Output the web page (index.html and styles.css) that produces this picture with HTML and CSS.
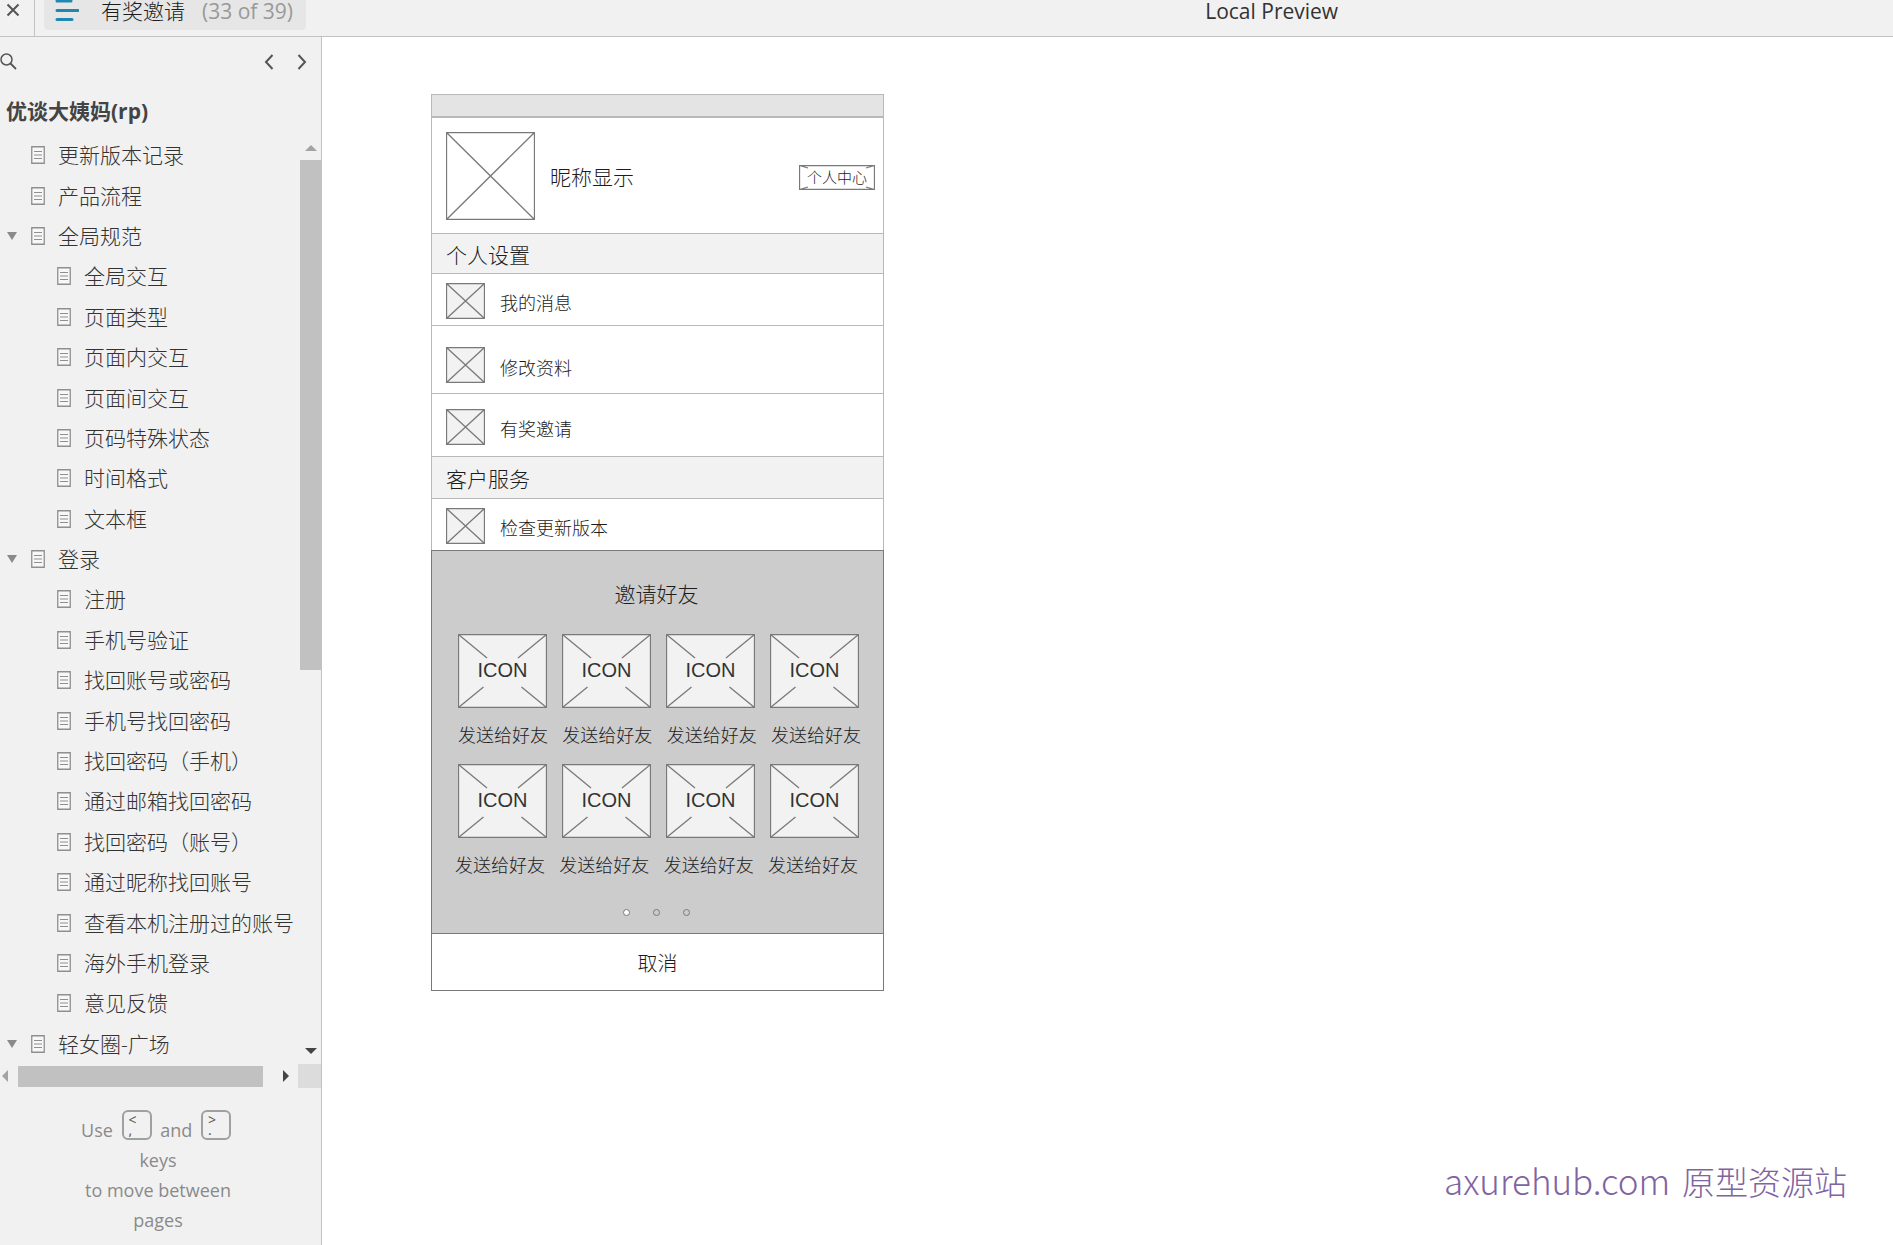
FILE: index.html
```html
<!DOCTYPE html>
<html lang="zh-CN">
<head>
<meta charset="utf-8">
<meta name="viewport" content="width=device-width, initial-scale=1">
<title>有奖邀请</title>
<link rel="stylesheet" href="styles.css">
</head>
<body>
<svg class="sprite" aria-hidden="true">
  <symbol id="page" viewBox="0 0 14 18"><path d="M.75.75h12.5v16.5H.75z" fill="#f7f7f7" stroke="#8f8f8f" stroke-width="1.3"/><path d="M3 5.5h8M3 9h8M3 12.5h8" stroke="#8f8f8f" stroke-width="1.2"/></symbol>
  <symbol id="box" viewBox="0 0 39 36"><path d="M.5.5h38v35H.5zL38.5 35.5M38.5.5L.5 35.5" fill="#f2f2f2" stroke="#797979" stroke-width="1.3"/></symbol>
  <symbol id="share" viewBox="0 0 89 74"><path d="M.5.5h88v73H.5z" fill="#f2f2f2" stroke="#797979" stroke-width="1.3"/><path d="M.5.5L29 24M88.500.5L60 24M.5 73.500L25.500 53M88.500 73.500L63.500 53" fill="none" stroke="#797979" stroke-width="1.3"/></symbol>
</svg>
<header class="topbar">
  <button class="close" aria-label="关闭"><svg width="14" height="14" viewBox="0 0 14 14"><path d="M1.500 1.500l11 11M12.500 1.500l-11 11" stroke="#555" stroke-width="2"/></svg></button>
  <button class="crumb">
    <svg width="24" height="24" viewBox="0 0 24 24"><path d="M2 3h14M2 12.500h21M2 21.500h15" stroke="#1f87b0" stroke-width="3" stroke-linecap="round"/></svg>
    <span class="crumb-name">有奖邀请</span>
    <span class="crumb-count">(33 of 39)</span>
  </button>
  <span class="preview">Local Preview</span>
</header>
<div class="shell">
  <aside class="sidebar">
    <div class="tools">
      <button aria-label="搜索"><svg width="17" height="17" viewBox="0 0 17 17"><circle cx="6.500" cy="6.500" r="5.500" fill="none" stroke="#555" stroke-width="1.500"/><path d="M10.500 10.500l5.500 5.500" stroke="#555" stroke-width="1.800"/></svg></button>
      <button class="prev" aria-label="上一页"><svg width="10" height="16" viewBox="0 0 10 16"><path d="M8.500 1L2 8l6.500 7" fill="none" stroke="#555" stroke-width="2"/></svg></button>
      <button aria-label="下一页"><svg width="10" height="16" viewBox="0 0 10 16"><path d="M1.500 1L8 8l-6.500 7" fill="none" stroke="#555" stroke-width="2"/></svg></button>
    </div>
    <h1 class="project">优谈大姨妈(rp)</h1>
    <div class="tree-area">
      <ul class="tree">
        <li><svg class="page"><use href="#page"/></svg><a href="#">更新版本记录</a></li>
        <li><svg class="page"><use href="#page"/></svg><a href="#">产品流程</a></li>
        <li class="open"><svg class="page"><use href="#page"/></svg><a href="#">全局规范</a></li>
        <li class="sub"><svg class="page"><use href="#page"/></svg><a href="#">全局交互</a></li>
        <li class="sub"><svg class="page"><use href="#page"/></svg><a href="#">页面类型</a></li>
        <li class="sub"><svg class="page"><use href="#page"/></svg><a href="#">页面内交互</a></li>
        <li class="sub"><svg class="page"><use href="#page"/></svg><a href="#">页面间交互</a></li>
        <li class="sub"><svg class="page"><use href="#page"/></svg><a href="#">页码特殊状态</a></li>
        <li class="sub"><svg class="page"><use href="#page"/></svg><a href="#">时间格式</a></li>
        <li class="sub"><svg class="page"><use href="#page"/></svg><a href="#">文本框</a></li>
        <li class="open"><svg class="page"><use href="#page"/></svg><a href="#">登录</a></li>
        <li class="sub"><svg class="page"><use href="#page"/></svg><a href="#">注册</a></li>
        <li class="sub"><svg class="page"><use href="#page"/></svg><a href="#">手机号验证</a></li>
        <li class="sub"><svg class="page"><use href="#page"/></svg><a href="#">找回账号或密码</a></li>
        <li class="sub"><svg class="page"><use href="#page"/></svg><a href="#">手机号找回密码</a></li>
        <li class="sub"><svg class="page"><use href="#page"/></svg><a href="#">找回密码（手机）</a></li>
        <li class="sub"><svg class="page"><use href="#page"/></svg><a href="#">通过邮箱找回密码</a></li>
        <li class="sub"><svg class="page"><use href="#page"/></svg><a href="#">找回密码（账号）</a></li>
        <li class="sub"><svg class="page"><use href="#page"/></svg><a href="#">通过昵称找回账号</a></li>
        <li class="sub"><svg class="page"><use href="#page"/></svg><a href="#">查看本机注册过的账号</a></li>
        <li class="sub"><svg class="page"><use href="#page"/></svg><a href="#">海外手机登录</a></li>
        <li class="sub"><svg class="page"><use href="#page"/></svg><a href="#">意见反馈</a></li>
        <li class="open"><svg class="page"><use href="#page"/></svg><a href="#">轻女圈-广场</a></li>
      </ul>
      <div class="vscroll" aria-hidden="true">
        <i class="arrow up"></i><div class="track"><div class="thumb"></div></div><i class="arrow down"></i>
      </div>
    </div>
    <div class="hscroll" aria-hidden="true">
      <i class="arrow left"></i><div class="thumb"></div><i class="arrow right"></i><div class="corner"></div>
    </div>
    <p class="hint">Use <kbd>&lt;<br>,</kbd> and <kbd>&gt;<br>.</kbd> keys<br>to move between pages</p>
  </aside>
  <main class="canvas">
    <section class="phone">
      <div class="status"></div>
      <div class="profile">
        <svg class="avatar" viewBox="0 0 89 88"><path d="M.5.5h88v87H.5zL88.500 87.500M88.500.5L.5 87.500" fill="#fff" stroke="#797979" stroke-width="1.3"/></svg>
        <span class="nick">昵称显示</span>
        <button class="center-btn"><svg viewBox="0 0 76 25"><path d="M.5.5h75v24H.5zL9 3M75.500.5L67 3M.5 24.500L9 22M75.500 24.500L67 22" fill="none" stroke="#797979" stroke-width="1.3"/></svg><span>个人中心</span></button>
      </div>
      <h2 class="group">个人设置</h2>
      <a class="row first" href="#"><svg><use href="#box"/></svg><span>我的消息</span></a>
      <a class="row tall" href="#"><svg><use href="#box"/></svg><span>修改资料</span></a>
      <a class="row mid" href="#"><svg><use href="#box"/></svg><span>有奖邀请</span></a>
      <h2 class="group">客户服务</h2>
      <a class="row last" href="#"><svg><use href="#box"/></svg><span>检查更新版本</span></a>
      <div class="sheet">
        <h3>邀请好友</h3>
        <div class="icons">
          <button><svg><use href="#share"/></svg><span>ICON</span></button>
          <button><svg><use href="#share"/></svg><span>ICON</span></button>
          <button><svg><use href="#share"/></svg><span>ICON</span></button>
          <button><svg><use href="#share"/></svg><span>ICON</span></button>
        </div>
        <div class="labels"><span>发送给好友</span><span>发送给好友</span><span>发送给好友</span><span>发送给好友</span></div>
        <div class="icons">
          <button><svg><use href="#share"/></svg><span>ICON</span></button>
          <button><svg><use href="#share"/></svg><span>ICON</span></button>
          <button><svg><use href="#share"/></svg><span>ICON</span></button>
          <button><svg><use href="#share"/></svg><span>ICON</span></button>
        </div>
        <div class="labels second"><span>发送给好友</span><span>发送给好友</span><span>发送给好友</span><span>发送给好友</span></div>
        <div class="dots"><i class="on"></i><i></i><i></i></div>
      </div>
      <button class="cancel">取消</button>
    </section>
    <div class="watermark"><span>axurehub.com </span>原型资源站</div>
  </main>
</div>
</body>
</html>
```
FILE: styles.css
```css
* { box-sizing: border-box; }
body {
  margin: 0;
  min-height: 100vh;
  display: flex;
  flex-direction: column;
  background: #fff;
  color: #1c1c1c;
  font-family: "Open Sans", "Noto Sans CJK SC", sans-serif;
  font-weight: 300;
  font-size: 21px;
}
button { margin: 0; padding: 0; border: 0; background: none; font: inherit; color: inherit; cursor: pointer; }
a { color: inherit; text-decoration: none; }
h1, h2, h3, p, ul { margin: 0; padding: 0; font-weight: inherit; }
svg { display: block; }
.sprite { position: absolute; width: 0; height: 0; }

.topbar {
  display: flex;
  height: 37px;
  background: #f1f1f1;
  border-bottom: 1px solid #c2c2c2;
}
.close { width: 35px; padding: 3px 0 0 6px; border-right: 1px solid #c2c2c2; display: flex; }
.crumb {
  display: flex;
  width: 262px;
  height: 30px;
  margin-left: 9px;
  padding-left: 11px;
  background: #e6e6e6;
  border-radius: 0 0 4px 4px;
  line-height: 22px;
  white-space: nowrap;
}
.crumb svg { margin-top: -2px; }
.crumb-name { margin-left: 22px; }
.crumb-count { margin-left: 17px; color: #999; font-weight: 400; }
.preview { margin-left: 47.5%; line-height: 22px; font-weight: 400; color: #333; }

.shell { flex: 1; display: flex; }
.sidebar {
  width: 322px;
  flex: none;
  display: flex;
  flex-direction: column;
  background: #f1f1f1;
  border-right: 1px solid #c2c2c2;
  color: #333;
}
.tools { display: flex; align-items: center; height: 49px; padding-right: 14px; gap: 23px; }
.prev { margin-left: auto; }
.project { height: 49px; padding-left: 6px; color: #444; line-height: 50px; font-size: 21px; font-weight: 700; }
.tree-area { flex: 1; display: flex; }
.tree { flex: 1; display: grid; grid-auto-rows: 1fr; list-style: none; }
.tree li { display: flex; align-items: center; padding-left: 31px; line-height: 32px; white-space: nowrap; }
.tree li.sub { padding-left: 57px; }
.tree li.open { padding-left: 7px; }
.tree li.open::before {
  content: "";
  margin-right: 14px;
  border: 5px solid transparent;
  border-top: 8px solid #8a8a8a;
  border-bottom: 0;
}
.page { width: 14px; height: 18px; margin-right: 13px; flex: none; }
.vscroll { width: 21px; flex: none; display: flex; flex-direction: column; align-items: center; padding: 10px 0 10px; }
.track { flex: 1; width: 100%; margin: 9px 0; }
.vscroll .thumb { height: 58%; background: #c1c1c1; }
.arrow { border: 6px solid transparent; }
.up { border-top: 0; border-bottom-color: #a3a3a3; }
.down { border-bottom: 0; border-top-color: #444; }
.left { border-left: 0; border-right-color: #a3a3a3; }
.right { border-right: 0; border-left-color: #444; }
.hscroll { display: flex; align-items: center; height: 24px; padding-left: 2px; }
.hscroll .thumb { flex: 1; height: 21px; margin: 0 20px 0 10px; background: #c1c1c1; }
.corner { width: 23px; height: 24px; margin-left: 9px; background: #dcdcdc; }
.hint {
  width: 180px;
  margin: 22px 0 10px 68px;
  color: #8a8a8a;
  text-align: center;
  font-size: 18px;
  line-height: 30px;
  font-weight: 400;
}
.hint kbd {
  display: inline-block;
  width: 30px;
  height: 30px;
  margin: 0 4px;
  padding: 3px 0 0 5px;
  border: 2px solid #a0a0a0;
  border-radius: 6px;
  font: 14px/10px "Open Sans", sans-serif;
  color: #555;
  text-align: left;
  vertical-align: 2px;
}

.canvas { flex: 1; padding: 57px 0 0 109px; }
.phone { width: 453px; border: 1px solid #b9b9b9; border-bottom: 0; }
.status { height: 23px; background: #e4e4e4; border-bottom: 2px solid #b9b9b9; }
.profile { display: flex; align-items: center; height: 116px; padding: 0 8px 0 14px; border-bottom: 1px solid #b9b9b9; }
.avatar { width: 89px; height: 88px; }
.nick { margin-left: 15px; }
.center-btn { display: grid; place-items: center; width: 76px; height: 25px; margin: 3px 0 0 auto; font-size: 15px; line-height: 22px; }
.center-btn > *, .icons button > * { grid-area: 1 / 1; }
.group { height: 40px; padding-left: 14px; background: #f2f2f2; border-bottom: 1px solid #b9b9b9; font-size: 21px; line-height: 42px; }
.row { display: flex; align-items: center; height: 52px; padding-left: 14px; border-bottom: 1px solid #b9b9b9; font-size: 18px; }
.row svg { width: 39px; height: 36px; }
.row span { margin: 3px 0 0 15px; }
.first { padding-top: 2px; }
.tall { height: 68px; padding-top: 11px; }
.mid { height: 63px; padding-top: 3px; }
.row + .group { height: 42px; line-height: 44px; }
.row.last { height: 51px; padding-top: 2px; border-bottom: 0; }
.sheet { margin: 0 -1px; height: 383px; padding: 0 28px 0 26px; background: #ccc; border: 1px solid #797979; border-bottom: 0; }
.sheet h3 { padding-top: 22px; height: 83px; font-size: 21px; line-height: 42px; text-align: center; }
.icons { display: grid; grid-template-columns: repeat(4, 1fr); gap: 15px; }
.icons button { display: grid; place-items: center; height: 74px; color: #333; font: 20px "Liberation Sans", sans-serif; }
.icons svg { width: 89px; height: 74px; }
.icons span { margin-bottom: 2px; }
.labels { display: flex; justify-content: space-between; height: 56px; margin: 0 -6px 0 0; font-size: 18px; line-height: 54px; white-space: nowrap; }
.labels.second { margin: 0 -3px 0 -3px; }
.dots { display: flex; justify-content: center; gap: 23px; padding-top: 15px; }
.dots i { width: 7px; height: 7px; border: 1px solid #797979; border-radius: 50%; }
.dots .on { background: #fff; }
.cancel { display: block; width: 453px; height: 58px; margin: 0 -1px; border: 1px solid #797979; background: #fff; font-size: 20px; }
.watermark {
  position: absolute;
  right: 46px;
  bottom: 39px;
  color: #8064a2;
  font: 300 33px/50px "Noto Sans CJK SC", sans-serif;
}
.watermark span { margin-right: 4px; font-size: 35px; }
```
